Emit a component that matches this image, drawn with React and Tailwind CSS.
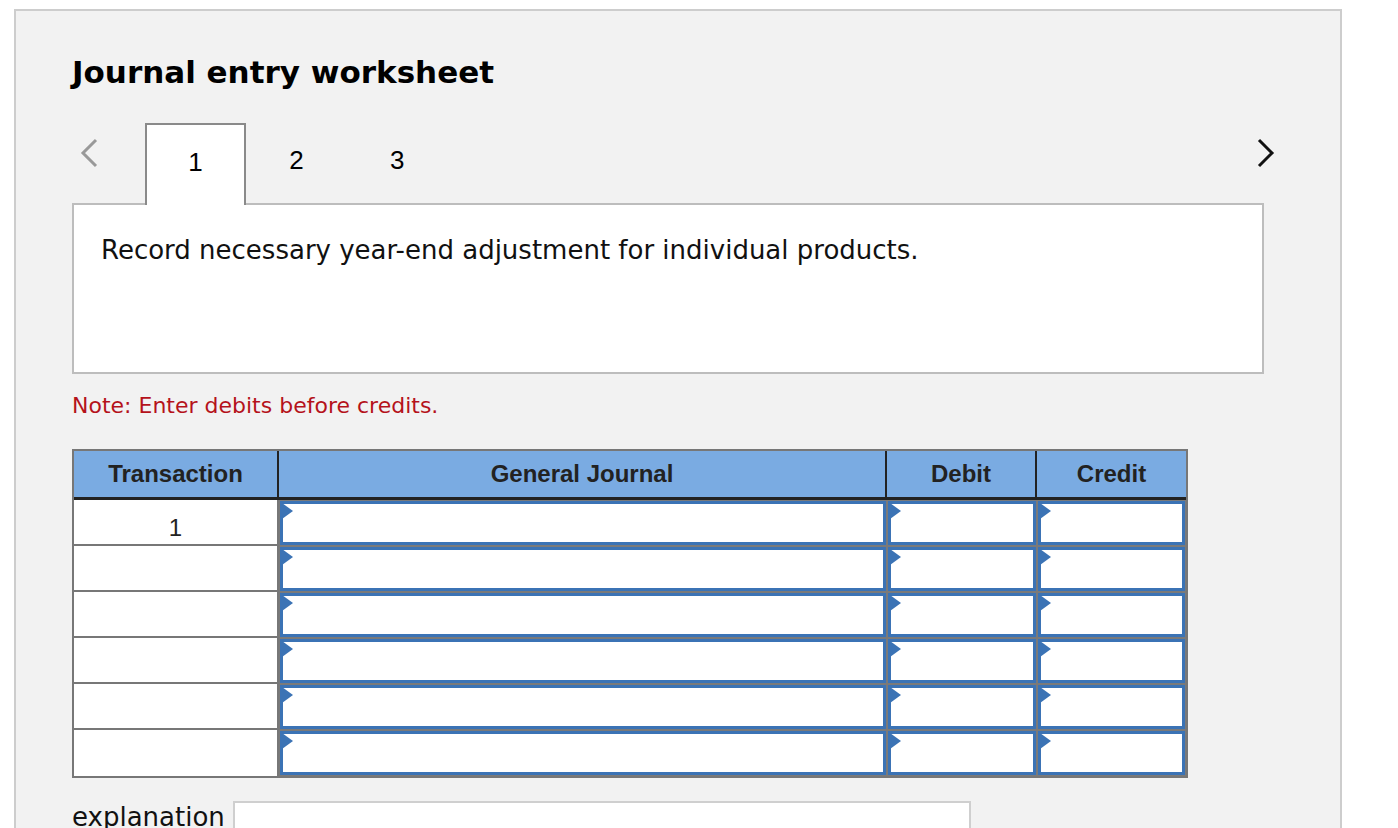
export default function App() {
  const rows = [0, 1, 2, 3, 4, 5];
  const Inp = ({ w }) => (
    <div className={`relative bg-[#7a7a7a] p-[1px] ${w}`}>
      <div className="h-full bg-white border-[3px] border-[#3b73b5]"></div>
      <div className="absolute left-[3px] top-[3px] w-0 h-0 border-t-[8px] border-b-[8px] border-l-[11px] border-t-transparent border-b-transparent border-l-[#3b73b5]"></div>
    </div>
  );
  return (
    <div className="w-[1398px] h-[828px] bg-white overflow-hidden pt-[9px] pl-[14px]" style={{ fontFamily: '"DejaVu Sans", Verdana, sans-serif' }}>
      <div className="w-[1328px] h-[830px] bg-[#f2f2f2] border-2 border-[#cdcdcd] pl-[56px] pt-[46px]">
        <h1 className="text-[31px] font-bold text-black leading-none">Journal entry worksheet</h1>
        <div className="relative mt-[35px] flex items-end h-[82px]" style={{ fontFamily: '"Liberation Sans", Arial, sans-serif' }}>
          <span className="absolute left-[6px] top-[14px]">
            <svg width="22" height="32" viewBox="0 0 22 32"><path d="M18 3 L5 16 L18 29" fill="none" stroke="#999" strokeWidth="3" /></svg>
          </span>
          <div className="ml-[73px] w-[101px] h-[82px] bg-white border-2 border-b-0 border-[#8a8a8a] flex justify-center pt-[18px] text-[26px] relative z-10">1</div>
          <div className="w-[101px] h-[82px] flex justify-center pt-[18px] text-[26px]">2</div>
          <div className="absolute left-[318px] top-[18px] text-[26px]">3</div>
          <span className="absolute left-[1183px] top-[14px]">
            <svg width="22" height="32" viewBox="0 0 22 32"><path d="M4 3 L17 16 L4 29" fill="none" stroke="#111" strokeWidth="3" /></svg>
          </span>
        </div>
        <div className="-mt-[2px] w-[1192px] h-[171px] bg-white border-2 border-[#bdbdbd] px-[27px] pt-[28px] text-[26px] leading-[34px] text-[#111]">
          Record necessary year-end adjustment for individual products.
        </div>
        <p className="mt-[15px] text-[#b5121b] text-[22px]">Note: Enter debits before credits.</p>
        <div className="mt-[27px] w-[1116px] border-2 border-[#777] text-[#222]" style={{ fontFamily: '"Liberation Sans", Arial, sans-serif' }}>
          <div className="flex h-[49px] bg-[#7aabe2] border-b-[3px] border-[#222] text-[24px] font-bold">
            <div className="w-[205px] flex items-center justify-center border-r-2 border-[#222]">Transaction</div>
            <div className="w-[608px] flex items-center justify-center border-r-2 border-[#222]">General Journal</div>
            <div className="w-[150px] flex items-center justify-center border-r-2 border-[#222]">Debit</div>
            <div className="flex-1 flex items-center justify-center">Credit</div>
          </div>
          {rows.map((r) => (
            <div key={r} className="flex h-[46px]">
              <div className={`w-[205px] bg-white border-r-2 border-[#777] text-[24px] flex justify-center pt-[10px] ${r < 5 ? 'border-b-2' : ''}`}>{r === 0 ? '1' : ''}</div>
              <Inp w="w-[608px]" />
              <Inp w="w-[150px]" />
              <Inp w="flex-1" />
            </div>
          ))}
        </div>
        <div className="mt-[20px] flex items-center gap-[8px] text-[26px] text-[#111]">
          <span>explanation</span>
          <div className="w-[738px] h-[34px] bg-white border-2 border-[#cfcfcf]"></div>
        </div>
      </div>
    </div>
  );
}
